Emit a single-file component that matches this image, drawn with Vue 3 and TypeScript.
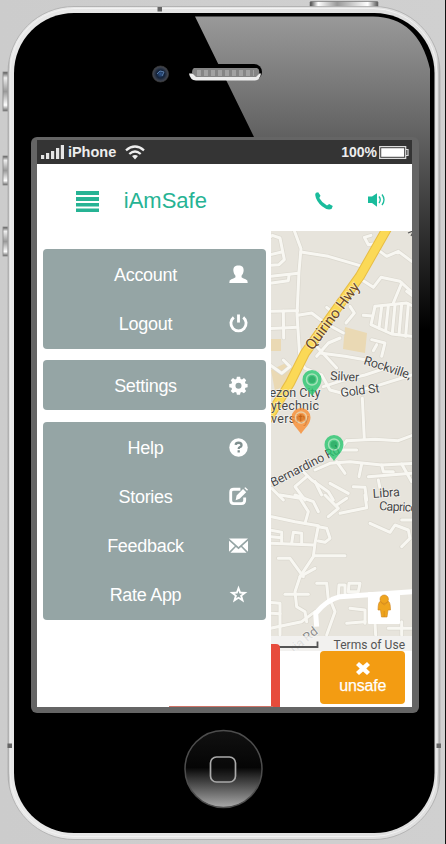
<script setup lang="ts">
type IconName = 'user' | 'power' | 'gear' | 'help' | 'edit' | 'mail' | 'star'
interface MenuItem { label: string; icon: IconName }

const groups: MenuItem[][] = [
  [{ label: 'Account', icon: 'user' }, { label: 'Logout', icon: 'power' }],
  [{ label: 'Settings', icon: 'gear' }],
  [
    { label: 'Help', icon: 'help' },
    { label: 'Stories', icon: 'edit' },
    { label: 'Feedback', icon: 'mail' },
    { label: 'Rate App', icon: 'star' },
  ],
]

const pins = [
  { x: 312, y: 381, fill: '#2dc772', core: '#0fa855' },
  { x: 301, y: 419, fill: '#f98f36', core: '#df6c0c' },
  { x: 334, y: 446, fill: '#2dc772', core: '#0fa855' },
]

const north: string[] = [
  'M0 40 L22 22 L45 30 L58 95 L42 110 L10 112',
  'M15 80 L50 72', 'M85 0 L108 62 L102 130 L96 260 L104 380',
  'M108 72 L190 85 L275 110 L300 118', 'M15 145 L100 136', 'M20 165 L70 158 L72 142',
  'M345 45 L310 50 L298 28 L318 22', 'M345 70 L365 85 L400 70 L440 100',
  'M290 155 L325 178 L348 148 L405 160 L440 192', 'M410 165 L385 225',
  'M15 250 L98 248', 'M15 302 L98 298', 'M55 250 L56 330', 'M98 262 L140 255 L180 285 L235 315',
  'M185 238 L215 262', 'M255 235 L268 255 L243 285', 'M155 385 L190 345 L225 330',
  'M145 345 L215 420', 'M165 375 L240 385 L300 395', 'M320 335 L360 345 L350 385 M335 350 L325 368',
  'M330 235 L425 225 L445 235', 'M330 235 L318 290 L380 318 L440 325', 'M295 262 L322 264',
  'M350 236 L342 300', 'M370 233 L362 308',
  'M390 231 L382 315', 'M410 229 L402 320', 'M430 228 L422 325', 'M425 190 L445 205',
]
const middle: string[] = [
  'M15 15 L50 40 L75 20 L55 0', 'M105 0 L120 25 L170 45 L195 90 L240 102',
  'M175 80 L230 62 L300 45 L360 25', 'M230 102 L320 82 L440 45', 'M292 115 L298 238',
  'M245 242 L330 238 L400 242 L445 225', 'M245 242 L225 270 L275 270',
  'M150 330 L195 310 L255 305 L350 315 L445 310', 'M215 305 L240 340',
  'M290 312 L282 350', 'M350 315 L355 335 L385 335', 'M410 312 L440 365',
  'M110 330 L140 360 L190 395 L205 420', 'M125 350 L90 380 L120 420',
  'M150 365 L170 405', 'M195 370 L250 400', 'M265 380 L300 382 L305 420', 'M340 360 L345 385',
  'M310 350 L440 340', 'M20 385 L55 420',
]
const south: string[] = [
  'M45 0 L105 10 L130 50 L120 85', 'M90 0 L145 20 L160 50', 'M180 0 L220 40 L190 65',
  'M215 30 L245 10', 'M20 65 L90 80 L160 92 L150 145 L145 185 L105 245 L90 290 L95 335 L120 350 L125 380',
  'M160 95 L185 100 L195 130 L180 142 L160 138', 'M15 105 L50 112 L50 145', 'M15 145 L145 150',
  'M80 145 L85 112 L110 115 L110 145', 'M15 125 L50 128', 'M225 55 L305 38 L300 0',
  'M145 182 L240 182', 'M40 190 L75 190 L115 245', 'M105 245 L150 220',
  'M315 85 L375 112 L390 90 L430 105 L435 130 L410 155', 'M410 75 L445 75',
  'M155 265 L185 265 L190 315', 'M220 300 L222 270 L240 270 L240 300', 'M250 290 L252 265 L285 265 L280 290 L255 290',
  'M60 298 L130 298', 'M15 322 L45 325 L45 420', 'M15 355 L45 356',
  'M200 325 L210 350 L185 420', 'M255 340 L300 345 L300 385', 'M245 385 L300 380', 'M330 385 L332 420',
  'M370 400 L445 400', 'M15 400 L110 380 L150 350', 'M410 380 L410 420',
]
const mainRoad = 'M155 395 L152 355 Q185 315 225 305 L300 300 L445 290'
const sections = [
  { roads: north, y: 228 },
  { roads: middle, y: 360 },
  { roads: south, y: 495 },
]
</script>

<template>
  <main class="stage">
    <svg class="device" viewBox="0 0 446 844" aria-hidden="true">
      <defs>
        <linearGradient id="rim" x1="0" y1="0" x2="1" y2="0">
          <stop offset="0" stop-color="#aaa" /><stop offset=".006" stop-color="#e8e8e8" />
          <stop offset=".992" stop-color="#dfdfdf" /><stop offset="1" stop-color="#aaa" />
        </linearGradient>
        <linearGradient id="glare" gradientUnits="userSpaceOnUse" x1="0" y1="15" x2="0" y2="330">
          <stop offset="0" stop-color="#9a9a9a" /><stop offset=".39" stop-color="#606060" /><stop offset="1" stop-color="#000" />
        </linearGradient>
        <linearGradient id="side" x1="0" y1="0" x2="0" y2="1">
          <stop offset="0" stop-color="#555" /><stop offset=".15" stop-color="#eee" /><stop offset=".5" stop-color="#999" />
          <stop offset=".85" stop-color="#fff" /><stop offset="1" stop-color="#666" />
        </linearGradient>
        <linearGradient id="topkey" x1="0" y1="0" x2="1" y2="0">
          <stop offset="0" stop-color="#444" /><stop offset=".12" stop-color="#fff" /><stop offset=".4" stop-color="#999" />
          <stop offset=".85" stop-color="#fff" /><stop offset="1" stop-color="#555" />
        </linearGradient>
        <linearGradient id="home" x1="0" y1="0" x2="0" y2="1">
          <stop offset="0" stop-color="#111" /><stop offset=".48" stop-color="#050505" />
          <stop offset=".62" stop-color="#333" /><stop offset="1" stop-color="#aaa" />
        </linearGradient>
        <radialGradient id="lens"><stop offset="0" stop-color="#2c548c" /><stop offset=".5" stop-color="#142238" /><stop offset="1" stop-color="#4b4d55" /></radialGradient>
      </defs>
      <rect x="445" width="1" height="844" fill="#111" />
      <g fill="url(#side)" stroke="#888" stroke-width=".8">
        <rect x="3" y="72" width="5" height="39" /><rect x="3" y="156" width="5" height="29" /><rect x="3" y="227" width="5" height="29" />
      </g>
      <rect x="310" y="1.500" width="68" height="6" rx="1" fill="url(#topkey)" stroke="#777" stroke-width=".7" />
      <rect x="8" y="6.500" width="432" height="833" rx="66" fill="url(#rim)" stroke="#aaa" stroke-width=".8" />
      <rect x="10" y="8.500" width="427" height="828" rx="64" fill="none" stroke="#f2f2f2" />
      <rect x="14" y="13" width="420.500" height="820" rx="60" fill="#000" />
      <path d="M195 16.500H373Q418 17 430 69V330H254V137Z" fill="url(#glare)" />
      <path d="M157.500 7h4.500v4.500h-4.500zM7.500 743.500h4.500v4.500H7.500zM436.500 743.500h4.500v4.500h-4.500z" fill="#666" />
      <circle cx="160.500" cy="74" r="8" fill="url(#lens)" stroke="#373737" stroke-width=".8" />
      <path d="M157 74l3-3 4 1-2 4" fill="none" stroke="#597dab" stroke-width="1" />
      <rect x="189" y="64" width="73" height="16" rx="8" fill="#000" />
      <path d="M189 73.500H261Q260 80 255 80.500H196Q190 80 189 73.500Z" fill="#ededed" />
      <path d="M194 68h63q3 1 2 6l-3 3H196l-4-4q0-4 2-5Z" fill="#858585" />
      <path d="M197 73h57" stroke="#a2a2a2" stroke-width="6" stroke-dasharray="4 3" />
      <circle cx="223.500" cy="769" r="38.500" fill="url(#home)" stroke="#4d4d4d" stroke-width="1.500" />
      <rect x="210.500" y="757" width="25" height="25" rx="6" fill="#111" fill-opacity=".35" stroke="#aaa" stroke-width="1.700" />
    </svg>

    <section class="phone-screen">
      <header class="status">
        <svg class="signal" viewBox="0 0 23 14"><path d="M0 10h3.200v4H0zM5 8h3.200v6H5zM10 6h3.200v8h-3.200zM15 3h3.200v11h-3.200zM19.800 0h3.200v14h-3.200z" fill="#e5e5e5" /></svg>
        <span class="carrier">iPhone</span>
        <svg class="wifi" viewBox="0 0 20 15"><g fill="none" stroke="#eee" stroke-width="2.300"><path d="M1 5.300q9-7.500 18 0M4.300 9q5.700-5 11.400 0" /></g><path d="M7 11q3-2 6 0l-3 3.500z" fill="#eee" /></svg>
        <span class="level">100%</span>
        <svg class="battery" viewBox="0 0 30 13"><path d="M.7.700h26v11.600H.7zM27 3.500h2v6h-2" fill="none" stroke="#ddd" stroke-width="1.200" /><path d="M2.200 2.200h23v8.600h-23z" fill="#fff" /></svg>
      </header>

      <nav class="toolbar">
        <svg class="burger" viewBox="0 0 23 21"><path d="M0 0h23v4H0zM0 6h23v4H0zM0 12h23v3.500H0zM0 17.500h23V21H0z" fill="#26b394" /></svg>
        <h1>iAmSafe</h1>
        <svg class="phone" viewBox="0 0 18 18"><path d="M1 .8L3.200.2 5.500 3.700 4.300 6Q7 11 12 13.500L14.200 12 17.800 14 16.500 17Q12 18.500 7 14.300 1 9 .2 3Q.2 1.500 1 .8Z" fill="#1abc9c" /></svg>
        <svg class="sound" viewBox="0 0 18 14"><path d="M0 3.500h4L9 .2v13.600L4 10H0z" fill="#1abc9c" /><path d="M11 3.500q2.500 3.300 0 6.500M14 1.500q4 5.200 0 10.500" fill="none" stroke="#1abc9c" stroke-width="1.300" /></svg>
      </nav>

      <div class="content">
        <aside class="menu">
          <ul v-for="(group, index) in groups" :key="index" class="panel">
            <li v-for="item in group" :key="item.label">
              <span>{{ item.label }}</span>
              <svg class="icon" viewBox="0 0 20 20">
                <path v-if="item.icon === 'user'" d="M10 .5c3.800 0 5.700 2 5.400 5.500-.2 2.500-1.200 4-2.200 5.200v1.600q1 1.200 4.300 2.300Q20 16 19.700 19H.3Q0 16 2.500 15.100q3.300-1.100 4.300-2.300v-1.600C5.800 10 4.800 8.500 4.600 6 4.300 2.500 6.200.5 10 .5z" />
                <template v-else-if="item.icon === 'power'"><path class="line" d="M5 3.500a8 8 0 1 0 10 0" /><path class="line" d="M10 .5v8.500" /></template>
                <path v-else-if="item.icon === 'gear'" fill-rule="evenodd" d="M8.300.7h3.400l.5 2.400 1.500.6 2.100-1.500 2.300 2.400-1.300 2 .6 1.500 2.200.4v3.300l-2.300.5-.6 1.500 1.300 2-2.300 2.400-2.100-1.400-1.500.6-.5 2.400H8.300l-.5-2.400-1.500-.6-2.100 1.400-2.300-2.400 1.300-2-.6-1.500-2.300-.5V8.500l2.300-.4.6-1.500-1.300-2 2.300-2.400 2.100 1.500 1.500-.6zM10 7a3.200 3.200 0 1 0 0 6.400A3.200 3.200 0 1 0 10 7z" />
                <template v-else-if="item.icon === 'help'"><circle cx="10" cy="10" r="9.700" /><path class="question" d="M7 7.200Q7.200 5 10 5q3.200 0 3.200 2.500 0 1.500-2 2.300-1 .4-1 1.700M10.200 13v2.200" /></template>
                <template v-else-if="item.icon === 'edit'"><path class="line" d="M12 2.400H5Q1.800 2.400 1.800 5.500V14q0 3.500 3.200 3.500h8q3.500 0 3.500-3.500v-3" /><path d="M7 14l1-5 6.800-6.800 3.300 3.200-6.900 7zM16 1l1.300-.8L20 2.800 19 4z" /></template>
                <path v-else-if="item.icon === 'mail'" d="M0 2.500h20L10 11.500zM0 5l6.200 5.500L0 16.500zM20 5v11.500l-6.200-6zM7.300 11.500L10 14l2.700-2.500 5.800 6h-17z" />
                <path v-else fill-rule="evenodd" d="M10 .5l2.400 6.600 7 .2-5.500 4.400 2 6.800-5.900-4-5.900 4 2-6.800L.6 7.300l7-.2zM10 6l-1 3-3.100.1 2.500 2L7.500 14l2.500-1.700 2.500 1.700-.9-2.900 2.500-2L11 9z" />
              </svg>
            </li>
          </ul>
        </aside>

        <div class="map-side">
          <svg class="map" viewBox="271 231 141 420">
            <rect x="271" y="231" width="142" height="420" fill="#e7e4dc" />
            <path d="M345 327l22 6-2 20-22-4zM271 339h10v12h-10zM271 370l17-8 10 15-23 14z" fill="#ead9b4" />
            <g v-for="layer in ['casing', 'surface']" :key="layer" :class="['roads', layer]">
              <g v-for="part in sections" :key="part.y" :transform="`translate(265 ${part.y}) scale(.33333)`">
                <path v-for="d in part.roads" :key="d" :d="d" />
              </g>
            </g>
            <path :d="mainRoad" transform="translate(265 495) scale(.33333)" fill="none" stroke="#fff" stroke-width="15" stroke-linejoin="round" />
            <path d="M389 225L360 276 305 353 290 383 267 420" fill="none" stroke="#e7bd45" stroke-width="10" />
            <path d="M389 225L360 276 305 353 290 383 267 420" fill="none" stroke="#fbd957" stroke-width="8" />
            <g class="map-label">
              <text class="highway" transform="translate(312.500 351) rotate(-53)" textLength="80">Quirino Hwy</text>
              <text transform="translate(363 364) rotate(18)" textLength="49">Rockville,</text>
              <text transform="translate(330 380) rotate(3)" textLength="29">Silver</text>
              <text transform="translate(341 397) rotate(-7)" textLength="39">Gold St</text>
              <text transform="translate(273 487) rotate(-27)" textLength="76">Bernardino Rd</text>
              <text x="262.500" y="396.500" textLength="58">uezon City</text>
              <text x="271" y="409.500" textLength="48">ytechnic</text>
              <text x="271" y="422.500" textLength="38">versity</text>
              <text transform="translate(373 498) rotate(-4)" textLength="27">Libra</text>
              <text transform="translate(379 510) rotate(3)" textLength="48">Capricorn</text>
              <text class="faint" transform="translate(294 653) rotate(-39)">ria Rd</text>
            </g>
            <path d="M408 233l5-2M411 236l2-4" stroke="#555" stroke-width="1.200" />
            <g v-for="pin in pins" :key="pin.y" opacity=".82">
              <path :transform="`translate(${pin.x} ${pin.y})`" d="M0-11a9.500 9.500 0 0 1 9.500 9.500C9.500 5 4 9 0 15-4 9-9.500 5-9.500-1.500A9.500 9.500 0 0 1 0-11z" :fill="pin.fill" />
              <circle :cx="pin.x" :cy="pin.y - 1.5" r="5.500" fill="none" stroke="#dff3de" stroke-opacity=".6" stroke-width="1.400" />
              <circle :cx="pin.x" :cy="pin.y - 1.5" r="3.500" :fill="pin.core" />
            </g>
            <rect x="368" y="592" width="32" height="32" rx="1" fill="#fff" />
            <g fill="#efa51e" stroke="#ce8420" stroke-width=".6">
              <path d="M380.500 601h7.500q2.500 1 2.500 9h-2.500l-1 7h-5.500l-1-7H378q0-8 2.500-9z" /><circle cx="384.200" cy="599.200" r="4.200" />
              <path d="M380.500 602l3.700 3 3.700-3M384.200 611v6" fill="none" />
            </g>
            <rect x="271" y="636" width="142" height="15" fill="#f5f5f5" opacity=".78" />
            <path d="M272 647H317.500V641.500" fill="none" stroke="#555" stroke-width="1.800" />
            <text class="terms" x="333.500" y="649" textLength="71.500">Terms of Use</text>
          </svg>
          <footer class="actions">
            <button class="unsafe">
              <svg viewBox="0 0 14 13"><path d="M3 0l4 3.500L11 0l3 3-3.700 3.500L14 10l-3 3-4-3.500L3 13l-3-3 3.700-3.500L0 3z" fill="#fff" /></svg>
              <span>unsafe</span>
            </button>
          </footer>
          <i class="danger-edge"></i>
        </div>
        <i class="danger-line"></i>
      </div>
    </section>
  </main>
</template>

<style>
body { margin: 0; background: #ccc; }
</style>

<style scoped>
* { box-sizing: border-box; }
.stage { position: relative; width: 446px; height: 844px; padding: 137px 0 0 31px; overflow: hidden; background: linear-gradient(90deg, #ccc, #d0d0d0); font-family: "Liberation Sans", Arial, sans-serif; }
.device { position: absolute; inset: 0; width: 446px; height: 844px; }
.phone-screen { position: relative; width: 388px; height: 576px; padding: 3px 7px 6px 6.400px; border-radius: 6px; background: #656565; }
.status { display: flex; align-items: center; height: 24px; padding-left: 4px; background: #343434; color: #ededed; font-size: 14.500px; font-weight: bold; }
.signal { width: 23px; height: 14px; }
.carrier { margin-left: 3.500px; }
.wifi { width: 20px; height: 15px; margin-left: 9px; }
.level { margin-left: auto; font-size: 14px; }
.battery { width: 30px; height: 13px; margin: 0 3px 0 2px; }
.toolbar { display: flex; height: 67px; padding: 0 26.500px 0 38.400px; align-items: center; background: #fff; }
.burger { width: 23px; height: 21px; margin-top: 8px; }
h1 { margin: 6px 0 0 25px; color: #26b394; font-size: 22px; font-weight: 400; line-height: 26px; }
.phone { width: 18px; height: 18px; margin: 6px 0 0 auto; }
.sound { width: 18px; height: 14px; margin: 4px 0 0 35px; }
.content { position: relative; display: flex; height: 476px; background: #fff; }
.menu { display: flex; flex-direction: column; flex: none; gap: 11.500px; width: 233.600px; padding: 18px 5px 0 5.600px; }
.panel { width: 223px; margin: 0; padding: .5px 0; border-radius: 4px; background: #95a5a5; list-style: none; }
.panel li { display: flex; align-items: center; height: 49.300px; padding: 2px 18px 0 37px; color: #fff; font-size: 18px; letter-spacing: -.3px; }
.panel span { flex: none; width: 131px; text-align: center; }
.icon { width: 19px; height: 19px; margin: -2px 0 0 auto; fill: #fff; }
.icon .line { fill: none; stroke: #fff; stroke-width: 3; }
.icon .question { fill: none; stroke: #7f8f8f; stroke-width: 2.400; }
.map-side { position: relative; display: flex; flex-direction: column; width: 141px; }
.map { display: block; width: 141px; height: 420px; }
.roads { fill: none; stroke: #f8f7f2; stroke-width: 9; stroke-linejoin: round; stroke-linecap: round; }
.casing { stroke: #dbd8cf; stroke-width: 13; }
.map-label { fill: #484848; stroke: #fff; stroke-width: 1.500px; stroke-opacity: .5; paint-order: stroke; font: 12.500px Roboto, sans-serif; }
.map-label .highway { font-size: 15px; fill: #69482a; }
.map-label .faint { fill: #8a8a8a; }
.terms { fill: #555; font: 12px Roboto, sans-serif; }
.actions { display: flex; justify-content: flex-end; height: 56px; padding-right: 7px; }
.unsafe { display: flex; flex-direction: column; align-items: center; width: 84.500px; height: 53px; padding: 11px 0 0; border: 0; border-radius: 4px; background: #f39c12; color: #fff; font: 16px "Liberation Sans", sans-serif; }
.unsafe svg { width: 14px; height: 13px; flex: none; }
.unsafe span { margin-top: 1px; line-height: 19px; letter-spacing: -.2px; -webkit-text-stroke: .25px #fff; }
.danger-edge { position: absolute; top: 413px; left: 0; width: 9.500px; height: 63px; border-top-right-radius: 4px; background: #e74c3c; }
.danger-line { position: absolute; left: 132px; bottom: 0; width: 104px; height: 1px; background: #cf7468; }
</style>
